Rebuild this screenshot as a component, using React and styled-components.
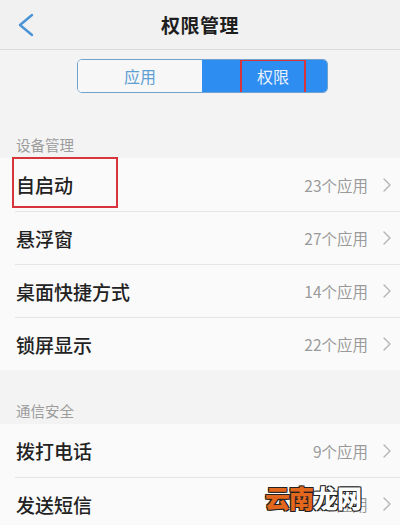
import React from "react";
import styled, { createGlobalStyle } from "styled-components";

const GlobalStyle = createGlobalStyle`
  body {
    margin: 0;
    background: #f3f3f3;
    font-family: "Noto Sans CJK SC", "Noto Sans", sans-serif;
  }
`;

const groups = [
  {
    title: "设备管理",
    top: 42,
    items: [
      { name: "自启动", count: "23个应用", marked: true },
      { name: "悬浮窗", count: "27个应用" },
      { name: "桌面快捷方式", count: "14个应用" },
      { name: "锁屏显示", count: "22个应用" },
    ],
  },
  {
    title: "通信安全",
    top: 31,
    items: [
      { name: "拨打电话", count: "9个应用" },
      { name: "发送短信", count: "11个应用" },
    ],
  },
];

const App = () => {
  return (
    <Page>
      <GlobalStyle />
      <Header>
        <Back>
          <svg width="18" height="24" viewBox="0 0 18 24">
            <path
              d="M15 2 L3 12 L15 22"
              fill="none"
              stroke="#4a93d6"
              strokeWidth="2.4"
              strokeLinecap="round"
              strokeLinejoin="round"
            />
          </svg>
        </Back>
        <Title>权限管理</Title>
      </Header>
      <TabsBar>
        <Tabs>
          <Tab>应用</Tab>
          <Tab active>
            <Marked>权限</Marked>
          </Tab>
        </Tabs>
      </TabsBar>
      {groups.map((g) => (
        <Group key={g.title}>
          <SectionTitle top={g.top}>{g.title}</SectionTitle>
          <List>
            {g.items.map((item) => (
              <Row key={item.name}>
                <Name marked={item.marked}>{item.name}</Name>
                <Count>{item.count}</Count>
                <Chevron>
                  <svg width="10" height="16" viewBox="0 0 10 16">
                    <path
                      d="M2 2 L8 8 L2 14"
                      fill="none"
                      stroke="#b4b4b4"
                      strokeWidth="1.4"
                      strokeLinecap="round"
                      strokeLinejoin="round"
                    />
                  </svg>
                </Chevron>
              </Row>
            ))}
          </List>
        </Group>
      ))}
      <Watermark>
        <Orange>云南</Orange>
        <White>龙网</White>
      </Watermark>
    </Page>
  );
};

const Page = styled.div`
  position: relative;
  width: 400px;
  height: 525px;
  overflow: hidden;
  background: #f3f3f3;
`;

const Header = styled.div`
  position: relative;
  height: 49px;
  display: flex;
  align-items: center;
  justify-content: center;
  background: #f1f1f1;
  border-bottom: 1px solid #dadada;
`;

const Back = styled.div`
  position: absolute;
  left: 17px;
  top: 13px;
  display: flex;
`;

const Title = styled.div`
  font-size: 19px;
  font-weight: 700;
  color: #1e1e1e;
  letter-spacing: 0.5px;
`;

const TabsBar = styled.div`
  display: flex;
  padding: 9px 0 0 77px;
`;

const Tabs = styled.div`
  display: flex;
  width: 251px;
  height: 34px;
  box-sizing: border-box;
  border: 1.5px solid #6fa3cf;
  border-radius: 5px;
  overflow: hidden;
`;

const Tab = styled.div`
  box-sizing: border-box;
  flex: ${(p) => (p.active ? "0 0 125px" : "1")};
  display: flex;
  align-items: center;
  justify-content: ${(p) => (p.active ? "flex-start" : "center")};
  padding-left: ${(p) => (p.active ? "39px" : "0")};
  font-size: 16px;
  color: ${(p) => (p.active ? "#e8f1fb" : "#5f9fd3")};
  background: ${(p) => (p.active ? "#2e8df0" : "#f7f7f7")};
`;

const Marked = styled.span`
  display: flex;
  align-items: center;
  justify-content: center;
  width: 66px;
  height: 35px;
  margin-left: -1px;
  box-sizing: border-box;
  border: 2.5px solid #d8343c;
`;

const Group = styled.div``;

const SectionTitle = styled.div`
  padding: ${(p) => p.top}px 16px 3px;
  line-height: 20px;
  font-size: 14.5px;
  color: #9c9c9c;
`;

const List = styled.div`
  background: #fafafa;
`;

const Row = styled.div`
  display: flex;
  align-items: center;
  height: 53px;
  padding: 0 8px 0 16px;
  & + & {
    border-top: 1px solid #e6e6e6;
    height: 52px;
    margin-left: 15px;
    padding-left: 1px;
  }
`;

const Name = styled.div`
  flex: 1;
  font-size: 19px;
  font-weight: 500;
  color: #222;
  position: relative;
  &::before {
    content: "";
    display: ${(p) => (p.marked ? "block" : "none")};
    position: absolute;
    left: -4px;
    top: -14px;
    width: 106px;
    height: 51px;
    box-sizing: border-box;
    border: 2.5px solid #d8343c;
  }
`;

const Count = styled.div`
  font-size: 15.5px;
  color: #9a9a9a;
  margin-right: 14px;
`;

const Chevron = styled.div`
  display: flex;
`;

const Watermark = styled.div`
  position: absolute;
  left: 265px;
  top: 482px;
  display: flex;
  font-size: 25px;
  font-weight: 900;
  line-height: 30px;
  letter-spacing: -1px;
`;

const Orange = styled.span`
  color: #e2661c;
  text-shadow: 1px 1px 0 #222, -1px -1px 0 #222, 1px -1px 0 #222, -1px 1px 0 #222;
`;

const White = styled.span`
  color: #ffffff;
  text-shadow: 1px 1px 0 #222, -1px -1px 0 #222, 1px -1px 0 #222, -1px 1px 0 #222;
`;

export default App;
